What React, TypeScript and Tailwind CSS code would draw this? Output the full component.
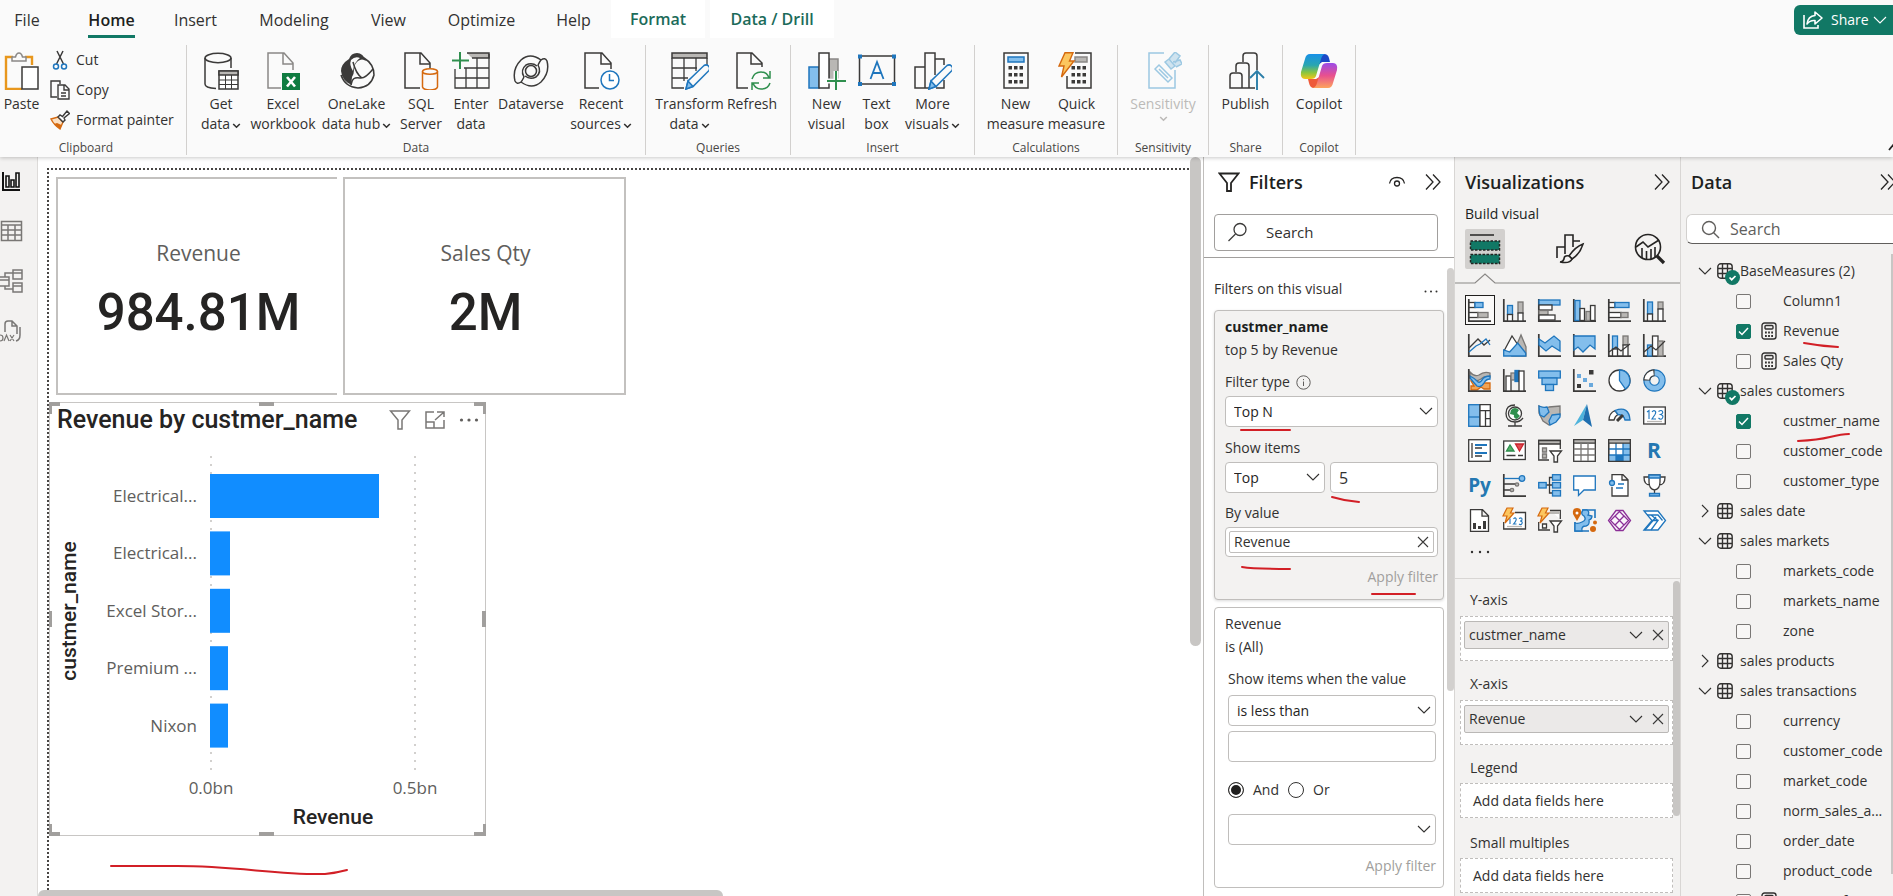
import React, { useState } from 'react';

type Kids = { children?: React.ReactNode };

const DARK = '#3b3a39';
const BLUE = '#1f76bd';
const SKY = '#83beec';
const GRAY = '#b9b7b4';
const GREEN = '#2f8f4e';
const ORANGE = '#d5690f';

/* ---------- small shared glyphs ---------- */

function Chevron({ className = '' }: { className?: string }) {
  return (
    <svg className={className} width="14" height="14" viewBox="0 0 14 14" fill="none" stroke="currentColor" strokeWidth="1.1" aria-hidden="true">
      <path d="M1 4l6 6 6-6" />
    </svg>
  );
}

function SmallChevron() {
  return (
    <svg className="ml-0.5 inline-block" width="9" height="9" viewBox="0 0 9 9" fill="none" stroke="currentColor" strokeWidth="1.600" aria-hidden="true">
      <path d="M1.200 3l3.300 3.200L7.800 3" />
    </svg>
  );
}

function DoubleChevron() {
  return (
    <svg width="18" height="18" viewBox="0 0 18 18" fill="none" stroke="#252423" strokeWidth="1.300" aria-hidden="true">
      <path d="M2 1.500l7 7.500-7 7.500M9 1.500l7 7.500-7 7.500" />
    </svg>
  );
}

function Cross() {
  return (
    <svg width="12" height="12" viewBox="0 0 12 12" fill="none" stroke="#3b3a39" strokeWidth="1.100" aria-hidden="true">
      <path d="M1 1l10 10M11 1L1 11" />
    </svg>
  );
}

function Stroke({ className, w, h, d }: { className: string; w: number; h: number; d: string }) {
  return (
    <svg className={`pointer-events-none absolute ${className}`} width={w} height={h} viewBox={`0 0 ${w} ${h}`} fill="none" stroke="#d21f26" strokeWidth="2" strokeLinecap="round" aria-hidden="true">
      <path d={d} />
    </svg>
  );
}

/* ---------- ribbon ---------- */

function Big({ children }: Kids) {
  return (
    <svg width="38" height="38" viewBox="0 0 38 38" fill="none" stroke={DARK} strokeWidth="1.500" className="shrink-0" aria-hidden="true">
      {children}
    </svg>
  );
}

const pencil = (
  <g stroke={BLUE} fill="#fafafa">
    <path d="M15 37l2-8L33 13.500q2.500-1.500 4.500.5t.5 4.500L22 34.500z" />
    <path d="M15 37l2-8 5 5.500z" fill={SKY} />
  </g>
);

const bolt = <path d="M7 .8h8L11.500 9H16L3.500 25 6 14H1z" fill="#fcc65f" stroke={ORANGE} strokeWidth="1.400" />;

const dots = (x: number, y: number) =>
  [0, 1, 2].flatMap((r) => [0, 1, 2].map((c) => <rect key={`${r}${c}`} x={x + c * 5.500} y={y + r * 7} width="3.500" height="3.500" fill={DARK} stroke="none" />));

const ribbonIcons: Record<string, React.ReactNode> = {
  paste: (
    <Big>
      <path d="M10 5H3v32h16M22 5h7v8" stroke="#e8971d" strokeWidth="2.400" />
      <path d="M9 9V5h3.500q1-4 3.500-4t3.500 4H23v4z" stroke="#8a8886" fill="#fafafa" />
      <rect x="19" y="15" width="16" height="22" fill="#fff" />
    </Big>
  ),
  get: (
    <Big>
      <ellipse cx="16" cy="6" rx="13" ry="4.700" />
      <path d="M3 6v26q0 4 11 4.500M29 6v10" />
      <path d="M17 19h19v18H17z" fill="#fff" />
      <path d="M17 19h19v4H17z" fill={GRAY} />
      <path d="M17 28h19M17 32.500h19M23.500 23v14M29.500 23v14" strokeWidth="1" />
    </Big>
  ),
  excel: (
    <Big>
      <path d="M17 36H4V1h16l9 10v7M19 1v11h10" stroke="#8a8886" />
      <rect x="18" y="21" width="18" height="17" fill="#107c41" stroke="none" />
      <path d="M23 25l8 9.500M31 25l-8 9.500" stroke="#fff" strokeWidth="2.600" />
    </Big>
  ),
  onelake: (
    <Big>
      <path d="M11 7q2-6 8-6t9 8q-4-3-8 0-4 3-4 9 0 4-2 7-1 5 0 8Q4 29 3 19q0-7 8-12z" fill={DARK} stroke="none" />
      <path d="M13 8q4-4 9-2-6 4-7 13-4-6-2-11z" fill="#fafafa" stroke="none" />
      <path d="M26 6q10 6 10 17-3 12-16 13Q7 35 3 23" />
      <path d="M15 10q3 12 9 16M13 33q1-9 9-7 5 1 13-9" />
    </Big>
  ),
  sql: (
    <Big>
      <path d="M18 36H3V1h16l9 10v5M18 1v11h10" />
      <ellipse cx="28" cy="19.500" rx="7.500" ry="2.800" stroke={ORANGE} fill="#fafafa" />
      <path d="M20.500 19.500V35q1 3 7.500 3t7.500-3V19.500" stroke={ORANGE} />
    </Big>
  ),
  enter: (
    <Big>
      <path d="M15 1h22v5H20" fill={GRAY} />
      <path d="M3 17v19h34V2M3 26h34M12 16h25M14 16v20M25 6v30" strokeWidth="1.300" />
      <path d="M8 0v17M0 8.500h17" stroke={GREEN} strokeWidth="2" />
    </Big>
  ),
  dataverse: (
    <Big>
      <circle cx="19" cy="19" r="5.500" />
      <path d="M29 8Q18 0 9 8 0 17 3 29q2 4 6 1 1-1 3-5M9 30q11 8 20 0 9-9 6-21-2-4-6-1-1 1-3 5" />
      <path d="M12 25q-4-7 2-12 6-3 11 1M26 13q4 7-2 12-6 3-11-1" />
    </Big>
  ),
  recent: (
    <Big>
      <path d="M17 36H3V1h17l9 10v6M19 1v11h10" />
      <circle cx="28" cy="28" r="9" stroke={BLUE} fill="#fff" />
      <path d="M27.500 22v6.500H32" stroke={BLUE} />
    </Big>
  ),
  transform: (
    <Big>
      <path d="M1 1h35v5H1z" fill={GRAY} />
      <path d="M1 6v30h12M36 6v7M1 16h25M1 26h16M13 6v23M25 6v13" strokeWidth="1.300" />
      {pencil}
    </Big>
  ),
  refresh: (
    <Big>
      <path d="M15 36H4V1h15l10 10v4M18 1v11h11" />
      <path d="M19 27q2-7 9-7 6 0 8 6M37 19v7h-7M37 31q-2 6-9 6-6 0-8-6M19 38v-7h7" stroke={GREEN} />
    </Big>
  ),
  visual: (
    <Big>
      <rect x="1" y="15" width="10" height="21" fill={SKY} stroke={BLUE} />
      <rect x="21" y="7" width="9" height="20" fill={GRAY} stroke="#8a8886" />
      <rect x="11" y="1" width="10" height="35" fill="#fff" />
      <path d="M28 19v19M19 29h19" stroke="#fafafa" strokeWidth="5" />
      <path d="M28 19v19M19 29h19" stroke={GREEN} strokeWidth="2" />
    </Big>
  ),
  textbox: (
    <Big>
      <rect x="1.500" y="4" width="35" height="28" />
      <path d="M0 2.500h4v4H0zM34 2.500h4v4h-4zM0 30h4v4H0zM34 30h4v4h-4z" fill={BLUE} stroke="none" />
      <path d="M12.500 27L19 10l6.500 17M15 21h8" stroke={BLUE} strokeWidth="1.800" />
    </Big>
  ),
  more: (
    <Big>
      <path d="M1 36V15h10v21zM11 36V1h10v22M21 7h9v6M11 36h5M30 28v8h-8" />
      {pencil}
    </Big>
  ),
  calc: (
    <Big>
      <rect x="7" y="1" width="24" height="35" />
      <rect x="11" y="5" width="16" height="5" fill={SKY} stroke={BLUE} />
      {dots(11.500, 14)}
    </Big>
  ),
  quick: (
    <Big>
      <path d="M17 1h16v35H9V24" />
      <rect x="17" y="5" width="12" height="5" fill={GRAY} stroke="#8a8886" />
      {dots(13.500, 14)}
      {bolt}
    </Big>
  ),
  sensitivity: (
    <Big>
      <g stroke="#9cc8e2">
        <path d="M20 1H5v35h26V18" />
        <path d="M11 17l4-4 13 13-4 4zM15 17l9 9" />
        <path d="M21 10l6 7 4-3-6-7zM25 7l6-7 5 4-5 7M29 10l7-2 2 4-6 3" fill="#cfe3ef" />
      </g>
    </Big>
  ),
  publish: (
    <Big>
      <path d="M3 36V24q0-3 3-3h6q3 0 3 3v12zM9 20v-6q0-3 3-3h7q3 0 3 3v22M16 10V4q0-3 3-3h8q3 0 3 3v14M15 36h13" />
      <path d="M30 38V19M23 26l7-7 7 7" stroke="#2b7ea8" strokeWidth="1.900" />
    </Big>
  ),
  copilot: (
    <svg width="38" height="38" viewBox="0 0 38 38" className="shrink-0" aria-hidden="true">
      <defs>
        <linearGradient id="cpA" x1="0" y1="0" x2="0" y2="1">
          <stop offset="0" stopColor="#1790e8" />
          <stop offset=".45" stopColor="#2aa6b0" />
          <stop offset=".75" stopColor="#8cc63d" />
          <stop offset="1" stopColor="#f5c518" />
        </linearGradient>
        <linearGradient id="cpB" x1="0" y1="0" x2="0" y2="1">
          <stop offset="0" stopColor="#9b4be8" />
          <stop offset=".5" stopColor="#e8508f" />
          <stop offset="1" stopColor="#fda45c" />
        </linearGradient>
      </defs>
      <path d="M19 2h5q4 0 5 4l1 4h-8l-5 4z" fill="#1b49c7" />
      <path d="M19 36h-5q-4 0-5-5l-1-4h8l5-3z" fill="#ee5a3a" />
      <path d="M10 2h15q-3 1-4 5l-5 17q-1 3-5 3H5q-5 0-4-7L5 7q1-5 5-5z" fill="url(#cpA)" />
      <path d="M28 36H13q3-1 4-5l5-17q1-3 5-3h6q5 0 4 7l-4 13q-1 5-5 5z" fill="url(#cpB)" />
    </svg>
  ),
};

function Tool({ icon, lines, w, caret, disabled }: { icon: string; lines: string[]; w: string; caret?: boolean; disabled?: boolean }) {
  return (
    <button type="button" disabled={disabled} className={`flex shrink-0 flex-col items-center ${w} ${disabled ? 'text-[#bcbab8]' : 'text-[#323130]'}`}>
      {ribbonIcons[icon]}
      <span className="mt-1 flex flex-col items-center text-sm leading-5 whitespace-nowrap">
        {lines.map((l, i) => (
          <span key={l}>
            {l}
            {caret && i === lines.length - 1 && lines.length > 1 ? <SmallChevron /> : null}
          </span>
        ))}
        {caret && lines.length === 1 ? <SmallChevron /> : null}
      </span>
    </button>
  );
}

function Group({ label, w, children }: Kids & { label: string; w: string }) {
  return (
    <section aria-label={label} className={`flex shrink-0 flex-col justify-between border-r border-[#d2d0ce] ${w}`}>
      <div className="flex justify-center pt-[7px]">{children}</div>
      <div className="text-center text-xs leading-[14px] text-[#484644]">{label}</div>
    </section>
  );
}

const tabs: [string, string][] = [
  ['File', 'w-[54px]'],
  ['Home', 'w-[115px]'],
  ['Insert', 'w-[53px]'],
  ['Modeling', 'w-[144px]'],
  ['View', 'w-[45px]'],
  ['Optimize', 'w-[141px]'],
  ['Help', 'w-[43px]'],
];

function Ribbon() {
  return (
    <header className="relative z-10 shrink-0 bg-[#fafafa] shadow-[0_1px_4px_rgba(0,0,0,0.22)]">
      <div className="flex h-[38px] items-stretch">
        <nav className="flex shrink-0 text-base text-[#323130]" aria-label="Ribbon tabs">
          {tabs.map(([t, w]) => (
            <button key={t} type="button" className={`flex items-stretch justify-center whitespace-nowrap ${w}`}>
              <span className={t === 'Home' ? 'border-b-[3px] border-[#117865] pt-2 font-semibold text-[#201f1e]' : 'pt-2'}>{t}</span>
            </button>
          ))}
          <button type="button" className="ml-4 w-[94px] bg-white font-semibold text-[#1c6b5a]">Format</button>
          <button type="button" className="ml-[5px] w-[124px] bg-white font-semibold whitespace-nowrap text-[#1c6b5a]">Data / Drill</button>
        </nav>
        <div className="flex-1" />
        <button type="button" className="mt-[5px] flex h-[30px] w-[99px] shrink-0 items-center gap-2 rounded-l-md bg-[#117865] pl-2 text-sm text-white">
          <svg width="21" height="20" viewBox="0 0 21 20" fill="none" stroke="currentColor" strokeWidth="1.600" aria-hidden="true">
            <path d="M2 5v13h14v-3" />
            <path d="M13 2l7 6-7 6v-3.500Q8 10 5 14q1-8 8-8.500z" strokeLinejoin="round" />
          </svg>
          <span>Share</span>
          <Chevron className="-ml-1" />
        </button>
      </div>
      <div className="flex h-[119px] items-stretch">
        <div className="flex flex-1 pt-[7px] pb-[2px]">
          <section aria-label="Clipboard" className="flex w-[187px] shrink-0 flex-col justify-between border-r border-[#d2d0ce]">
            <div className="flex pt-[7px]">
              <Tool icon="paste" lines={['Paste']} w="w-[43px]" />
              <div className="flex flex-col gap-2 pl-[7px] text-sm text-[#323130]">
                <button type="button" className="-mt-[3px] flex h-[22px] items-center gap-1.5">
                  <svg width="20" height="20" viewBox="0 0 20 20" fill="none" stroke={DARK} strokeWidth="1.500" aria-hidden="true">
                    <path d="M7 1l6.500 13M13 1L6.500 14" />
                    <g stroke={BLUE}><circle cx="6" cy="16.500" r="2.500" /><circle cx="14" cy="16.500" r="2.500" /></g>
                  </svg>
                  Cut
                </button>
                <button type="button" className="flex h-[22px] items-center gap-1.5">
                  <svg width="20" height="20" viewBox="0 0 20 20" fill="none" stroke={DARK} strokeWidth="1.400" aria-hidden="true">
                    <path d="M7 17H1V1h9v3" /><path d="M8 5h7l4 4v10H8zM14 5v5h5M11 13h5M11 16h5" />
                  </svg>
                  Copy
                </button>
                <button type="button" className="flex h-[22px] items-center gap-1.5 whitespace-nowrap">
                  <svg width="20" height="20" viewBox="0 0 20 20" fill="none" stroke={DARK} strokeWidth="1.400" aria-hidden="true">
                    <path d="M1 9l7-2 5 5-3 7q-6-4-9-10z" stroke={ORANGE} fill="#fbe0c3" />
                    <path d="M7 13l-3 1 6 5 1.500-4z" fill={ORANGE} stroke="none" />
                    <path d="M8 7l2-2 2.500 1.500L17 1l2.500 2.500L14 8l1 2-2 2z" fill="#fff" />
                  </svg>
                  Format painter
                </button>
              </div>
            </div>
            <div className="pr-[14px] text-center text-xs leading-[14px] text-[#484644]">Clipboard</div>
          </section>
          <Group label="Data" w="w-[459px]">
            <div className="flex w-full pl-1">
              <Tool icon="get" lines={['Get', 'data']} w="w-[60px]" caret />
              <Tool icon="excel" lines={['Excel', 'workbook']} w="w-[64px]" />
              <Tool icon="onelake" lines={['OneLake', 'data hub']} w="w-[83px]" caret />
              <Tool icon="sql" lines={['SQL', 'Server']} w="w-[46px]" />
              <Tool icon="enter" lines={['Enter', 'data']} w="w-[54px]" />
              <Tool icon="dataverse" lines={['Dataverse']} w="w-[66px]" />
              <Tool icon="recent" lines={['Recent', 'sources']} w="w-[74px]" caret />
            </div>
          </Group>
          <Group label="Queries" w="w-[145px]">
            <Tool icon="transform" lines={['Transform', 'data']} w="w-[68px]" caret />
            <Tool icon="refresh" lines={['Refresh']} w="w-[57px]" />
          </Group>
          <Group label="Insert" w="w-[184px]">
            <Tool icon="visual" lines={['New', 'visual']} w="w-[50px]" />
            <Tool icon="textbox" lines={['Text', 'box']} w="w-[50px]" />
            <Tool icon="more" lines={['More', 'visuals']} w="w-[62px]" caret />
          </Group>
          <Group label="Calculations" w="w-[143px]">
            <Tool icon="calc" lines={['New', 'measure']} w="w-[61px]" />
            <Tool icon="quick" lines={['Quick', 'measure']} w="w-[61px]" />
          </Group>
          <Group label="Sensitivity" w="w-[91px]">
            <Tool icon="sensitivity" lines={['Sensitivity']} w="w-[80px]" caret disabled />
          </Group>
          <Group label="Share" w="w-[74px]">
            <Tool icon="publish" lines={['Publish']} w="w-[60px]" />
          </Group>
          <Group label="Copilot" w="w-[73px]">
            <Tool icon="copilot" lines={['Copilot']} w="w-[60px]" />
          </Group>
        </div>
        <button type="button" aria-label="Collapse ribbon" className="self-end overflow-hidden pb-1.5">
          <svg width="5" height="9" viewBox="0 0 5 9" fill="none" stroke="#252423" strokeWidth="1.800" aria-hidden="true">
            <path d="M1 8l5-6" />
          </svg>
        </button>
      </div>
    </header>
  );
}

/* ---------- view switcher ---------- */

function ViewRail() {
  return (
    <nav aria-label="Views" className="flex w-[38px] shrink-0 flex-col gap-[26px] border-r border-[#dddbd9] bg-[#f3f2f1] pt-3">
      <button type="button" aria-label="Report view" className="flex h-6 items-center">
        <svg width="24" height="24" viewBox="0 0 24 24" fill="none" stroke="#111" strokeWidth="1.600" aria-hidden="true">
          <path d="M3 3v18h17" strokeWidth="2" /><path d="M6 18V7h3v11zM11 18v-7h3v7zM16 18V4h3v14z" />
        </svg>
      </button>
      <button type="button" aria-label="Table view" className="flex h-6 items-center">
        <svg width="24" height="24" viewBox="0 0 24 24" fill="none" stroke="#797775" strokeWidth="1.500" aria-hidden="true">
          <path d="M1.500 2.500h20v19h-20zM1.500 6h20M1.500 11h20M1.500 16h20M8 6v15M15 6v15" />
        </svg>
      </button>
      <button type="button" aria-label="Model view" className="flex h-6 items-center">
        <svg width="24" height="24" viewBox="0 0 24 24" fill="none" stroke="#797775" strokeWidth="1.500" aria-hidden="true">
          <path d="M0 8h9v9H0M0 11h9M13 1h9v9h-9zM13 4h9M13 14h9v9h-9zM13 17h9M5 8V4h8M5 17v3h8" />
        </svg>
      </button>
      <button type="button" aria-label="DAX query view" className="flex h-6 items-center">
        <svg width="24" height="24" viewBox="0 0 24 24" fill="none" stroke="#797775" strokeWidth="1.500" aria-hidden="true">
          <path d="M5 13V5q0-3 3-3h4l5 5v8M12 2v5h5M20 8v8q0 5-4 6" />
          <path d="M0 16q3 0 3 3t-3 3M4 22l2.500-6L9 22M10 16l4 6M14 16l-4 6" strokeWidth="1.200" />
        </svg>
      </button>
    </nav>
  );
}

/* ---------- report canvas ---------- */

const bars = [
  { name: 'Electrical...', w: 169 },
  { name: 'Electrical...', w: 20 },
  { name: 'Excel Stor...', w: 20 },
  { name: 'Premium ...', w: 18 },
  { name: 'Nixon', w: 18 },
];

function Kpi({ label, value, className }: { label: string; value: string; className: string }) {
  return (
    <article className={`absolute flex h-[218px] flex-col items-center border-2 border-[#c3c1bf] bg-white pt-[58px] pl-[2px] ${className}`}>
      <h3 className="text-[21px] leading-8 text-[#605e5c]">{label}</h3>
      <p className="mt-4 font-['Roboto'] text-[51px] leading-[56px] font-medium text-[#252423]">{value}</p>
    </article>
  );
}

function ReportCanvas() {
  return (
    <main className="relative min-w-0 flex-1 overflow-hidden bg-white">
      <div className="absolute top-[11px] right-[14px] bottom-[6px] left-[9px] border-t-2 border-l-2 border-dotted border-[#484644]" />
      <Kpi label="Revenue" value="984.81M" className="top-5 left-[18px] w-[281px] border-r-0" />
      <Kpi label="Sales Qty" value="2M" className="top-5 left-[305px] w-[283px]" />

      <article className="absolute top-[245px] left-[11px] h-[434px] w-[437px] border border-[#c8c6c4] bg-white">
        <div className="flex items-center pt-[3px] pr-1.5 pl-[7px]">
          <h3 className="flex-1 font-['Roboto'] text-[25px] leading-7 font-medium whitespace-nowrap text-[#252423]">Revenue by custmer_name</h3>
          <div className="flex items-center gap-[14px]">
            <button type="button" aria-label="Filters on visual">
              <svg width="22" height="20" viewBox="0 0 22 20" fill="none" stroke="#797775" strokeWidth="1.500" aria-hidden="true"><path d="M1.500 1h19L13 10v9H9v-9z" /></svg>
            </button>
            <button type="button" aria-label="Focus mode">
              <svg width="20" height="18" viewBox="0 0 20 18" fill="none" stroke="#797775" strokeWidth="1.500" aria-hidden="true"><path d="M9 1H1v16h18V9M1 11h8v6M12 1h7v5M18.500 1.500L10 9" /></svg>
            </button>
            <button type="button" aria-label="More options">
              <svg width="20" height="6" viewBox="0 0 20 6" fill="#605e5c" aria-hidden="true"><circle cx="2.500" cy="3" r="1.600" /><circle cx="10" cy="3" r="1.600" /><circle cx="17.500" cy="3" r="1.600" /></svg>
            </button>
          </div>
        </div>
        <svg className="absolute top-[28px] left-0" width="435" height="402" viewBox="0 0 435 402" role="img" aria-label="Revenue by customer">
          <g stroke="#d2d0ce" strokeWidth="2" strokeDasharray="2 6">
            <path d="M161 25v320M365 25v320" />
          </g>
          {bars.map((b, i) => (
            <g key={i}>
              <rect x="160" y={43 + i * 57.400} width={b.w} height="44" fill="#118dff" />
              <text x="147" y={71 + i * 57.400} textAnchor="end" fontSize="17" fill="#605e5c">{b.name}</text>
            </g>
          ))}
          <g fontSize="17" fill="#605e5c" textAnchor="middle">
            <text x="161" y="363">0.0bn</text>
            <text x="365" y="363">0.5bn</text>
          </g>
          <g fontSize="21" fontWeight="500" fill="#252423" textAnchor="middle" className="font-['Roboto']">
            <text x="283" y="393">Revenue</text>
            <text x="26" y="180" transform="rotate(-90 26 180)">custmer_name</text>
          </g>
        </svg>
        <svg className="pointer-events-none absolute -top-px -left-px" width="437" height="434" viewBox="0 0 437 434" fill="#a19f9d" aria-hidden="true">
          <path d="M0 0h11v4H3v8H0zM437 0h-12v4h9v8h3zM0 434h11v-4H3v-8H0zM437 434h-12v-4h9v-8h3zM210 0h15v4h-15zM210 430h15v4h-15zM0 209h3v16H0zM433 209h4v16h-4z" />
        </svg>
      </article>
      <Stroke className="bottom-[19px] left-[71px]" w={241} h={14} d="M2 3h66c60 0 100 9 148 8q11-1 22-4" />

      <div className="absolute top-0 right-[2px] h-[489px] w-[11px] rounded-full bg-[#c8c6c4]" />
      <div className="absolute bottom-0 left-0 h-[6px] w-[685px] rounded-t-md bg-[#c8c6c4]" />
    </main>
  );
}

/* ---------- filters ---------- */

function Dropdown({ label, options, className = '' }: { label: string; options: string[]; className?: string }) {
  return (
    <div className={`relative h-[31px] shrink-0 ${className}`}>
      <select aria-label={label} className="h-full w-full appearance-none rounded-sm border border-[#c0bebc] bg-white pl-2 text-sm text-[#252423]">
        {options.map((o) => <option key={o}>{o}</option>)}
      </select>
      <Chevron className="pointer-events-none absolute top-2 right-[5px]" />
    </div>
  );
}

function FiltersPane() {
  const [mode, setMode] = useState('and');
  return (
    <aside aria-label="Filters" className="relative flex w-[252px] shrink-0 flex-col overflow-hidden border-x border-[#c0bebc] border-r-[#d8d6d4] bg-white text-sm text-[#323130]">
      <div className="shrink-0 border-b border-[#a19f9d] px-2.5 pb-[6px]">
        <div className="flex h-[49px] items-center pl-1">
          <svg width="22" height="20" viewBox="0 0 22 20" fill="none" stroke="#252423" strokeWidth="1.800" aria-hidden="true"><path d="M1.500 1.500h19L13 11v8H9v-8z" /></svg>
          <h2 className="ml-[9px] text-lg font-semibold text-[#201f1e]">Filters</h2>
          <div className="flex-1" />
          <svg width="18" height="12" viewBox="0 0 18 12" fill="none" stroke="#252423" strokeWidth="1.300" aria-hidden="true"><path d="M1.500 7.500q1-6 7.500-6t7.500 6" /><circle cx="9" cy="7.500" r="2.500" /></svg>
          <button type="button" aria-label="Collapse filters" className="mr-0.5 ml-[18px]"><DoubleChevron /></button>
        </div>
        <label className="mt-2 mr-1.5 flex h-[37px] items-center gap-[18px] rounded-sm border border-[#a19f9d] pl-3">
          <svg className="shrink-0" width="21" height="21" viewBox="0 0 21 21" fill="none" stroke="#3b3a39" strokeWidth="1.300" aria-hidden="true"><circle cx="13" cy="7.500" r="6" /><path d="M8.500 12L1.500 19" /></svg>
          <input aria-label="Search filters" placeholder="Search" className="w-full min-w-0 bg-transparent text-[15px] outline-none placeholder:text-[#323130]" />
        </label>
      </div>
      <div className="px-2.5 pt-[19px]">
        <div className="flex h-[23px] items-center justify-between pr-1.5">
          <span>Filters on this visual</span>
          <svg className="mt-1.5" width="14" height="3" viewBox="0 0 14 3" fill="#323130" aria-hidden="true"><circle cx="1.500" cy="1.500" r="1" /><circle cx="7" cy="1.500" r="1" /><circle cx="12.500" cy="1.500" r="1" /></svg>
        </div>
        <section className="relative mt-[10px] h-[290px] w-[230px] rounded-sm border border-[#c0bebc] bg-[#f3f2f1] pt-1 pl-2.5 shadow-[0_1px_3px_rgba(0,0,0,0.15)]">
          <h3 className="leading-[23px] font-bold text-[#201f1e]">custmer_name</h3>
          <p className="leading-[23px]">top 5 by Revenue</p>
          <div className="mt-[10px] flex items-center gap-1.5 leading-[22px]">
            Filter type
            <svg width="15" height="15" viewBox="0 0 15 15" fill="none" stroke="#605e5c" aria-hidden="true"><circle cx="7.500" cy="7.500" r="6.700" /><path d="M7.500 6.500V11M7.500 4v1.200" /></svg>
          </div>
          <Dropdown label="Filter type" options={['Top N', 'Basic filtering']} className="mt-[3px] w-[213px]" />
          <div className="mt-[10px] leading-[22px]">Show items</div>
          <div className="mt-[3px] flex gap-[5px]">
            <Dropdown label="Show items" options={['Top', 'Bottom']} className="w-[100px]" />
            <input aria-label="Item count" defaultValue="5" className="h-[31px] w-[108px] rounded-sm border border-[#c0bebc] bg-white px-2 text-base" />
          </div>
          <div className="mt-[9px] leading-[22px]">By value</div>
          <div className="mt-[3px] w-[213px] rounded-sm border border-[#c0bebc] bg-white p-[3px]">
            <div className="flex h-[22px] items-center justify-between rounded-xs border border-[#c0bebc] pr-1 pl-1">
              <span>Revenue</span>
              <button type="button" aria-label="Remove Revenue"><Cross /></button>
            </div>
          </div>
          <button type="button" className="mt-[9px] block w-[213px] text-right leading-[22px] text-[#a19f9d]">Apply filter</button>
          <Stroke className="top-[116px] left-6" w={54} h={6} d="M2 3h49" />
          <Stroke className="top-[184px] left-[115px]" w={32} h={10} d="M2 2q13 4 27 5" />
          <Stroke className="top-[253px] left-[25px]" w={54} h={8} d="M2 3q12 2 48 2" />
          <Stroke className="top-[280px] left-[155px]" w={48} h={6} d="M2 3h43" />
        </section>
        <section className="mt-[7px] h-[281px] w-[230px] rounded-sm border border-[#c0bebc] bg-white px-2.5 pt-1">
          <h3 className="leading-[23px]">Revenue</h3>
          <p className="leading-[23px]">is (All)</p>
          <div className="mt-[10px] ml-[3px] w-[208px]">
            <div className="leading-[22px] whitespace-nowrap">Show items when the value</div>
            <Dropdown label="Condition" options={['is less than', 'is greater than']} className="mt-[5px]" />
            <input aria-label="Condition value" className="mt-[5px] block h-[31px] w-full rounded-sm border border-[#c0bebc] bg-white px-2" />
            <div className="mt-[17px] flex h-[22px] items-center">
              {[['and', 'And'], ['or', 'Or']].map(([v, t]) => (
                <label key={v} className="mr-[9px] flex items-center gap-[9px]">
                  <input
                    type="radio"
                    name="logic"
                    checked={mode === v}
                    onChange={() => setMode(v)}
                    className="h-4 w-4 appearance-none rounded-full border border-[#323130] bg-white checked:bg-[#201f1e] checked:shadow-[inset_0_0_0_2px_#fff]"
                  />
                  {t}
                </label>
              ))}
            </div>
            <Dropdown label="Second condition" options={['']} className="mt-[13px]" />
            <button type="button" className="mt-[10px] block w-full text-right leading-[22px] text-[#a19f9d]">Apply filter</button>
          </div>
        </section>
      </div>
      <div className="absolute top-[111px] right-0 h-[423px] w-[7px] rounded-full bg-[#d2d0ce]" />
    </aside>
  );
}

/* ---------- visualizations ---------- */

const axis = <path d="M.8 0v22.200H23" stroke={DARK} strokeWidth="1.700" />;
const b = { stroke: BLUE, fill: SKY } as const;
const g = { stroke: '#797775', fill: GRAY } as const;
const k = { stroke: DARK, fill: '#fff' } as const;
const smallBolt = <path d="M4-1h6L7.500 4H11L2 14l2-7H0z" fill="#fcc65f" stroke={ORANGE} strokeWidth="1.200" />;

const gallery: [string, React.ReactNode][] = [
  ['Stacked bar chart', <>{axis}<rect x="1" y="3.500" width="6" height="5" {...k} /><rect x="7" y="3.500" width="8" height="5" {...b} /><rect x="1" y="13.500" width="9" height="5" {...k} /><rect x="10" y="13.500" width="10" height="5" {...g} /></>],
  ['Stacked column chart', <>{axis}<rect x="4.500" y="6.500" width="5" height="9" {...b} /><rect x="4.500" y="15.500" width="5" height="6.500" {...k} /><rect x="15" y="3" width="5" height="11" {...g} /><rect x="15" y="14" width="5" height="8" {...k} /></>],
  ['Clustered bar chart', <>{axis}<rect x="1" y="1" width="21" height="5" {...b} /><rect x="1" y="6" width="13" height="5" {...k} /><rect x="1" y="11.500" width="9" height="4.500" {...g} /><rect x="1" y="16" width="16" height="5" {...k} /></>],
  ['Clustered column chart', <>{axis}<rect x="2" y="1.500" width="5" height="20" {...b} /><rect x="7" y="9.500" width="4.500" height="12" {...k} /><rect x="13" y="12.500" width="4.500" height="9" {...g} /><rect x="17.500" y="6.500" width="4.500" height="15" {...k} /></>],
  ['100% stacked bar chart', <>{axis}<rect x="1" y="3.500" width="6" height="5" {...k} /><rect x="7" y="3.500" width="14" height="5" {...b} /><rect x="1" y="13.500" width="12" height="5" {...k} /><rect x="13" y="13.500" width="7" height="5" {...g} /></>],
  ['100% stacked column chart', <>{axis}<rect x="4.500" y="3" width="5" height="12" {...b} /><rect x="4.500" y="15" width="5" height="7" {...k} /><rect x="15" y="3" width="5" height="7" {...g} /><rect x="15" y="10" width="5" height="12" {...k} /></>],
  ['Line chart', <>{axis}<path d="M1 14L10 5l6 6 6-5" stroke={DARK} /><path d="M1 18l7-6 4-2 6-5 4 6" stroke={BLUE} /></>],
  ['Area chart', <><path d="M9 22L18 1l5 12v9z" {...g} /><path d="M1 17L9 2l8 12" {...k} /><path d="M.7 22V16l6 2 8-9 8 10v3z" {...b} /></>],
  ['Stacked area chart', <>{axis}<path d="M1 5l6 4 9-7 6 5v10l-8-5-6 5-7-6z" {...b} /></>],
  ['100% stacked area chart', <>{axis}<path d="M1 2h21v13l-5-4-7 7-5-5-4 3z" {...b} /></>],
  ['Line and stacked column chart', <>{axis}<rect x="4.500" y="2" width="5" height="13" {...b} /><rect x="4.500" y="15" width="5" height="7" {...k} /><rect x="15" y="2" width="5" height="9" {...g} /><rect x="15" y="11" width="5" height="11" {...k} /><path d="M1 18l7-5 5 4 9-7" stroke={DARK} /></>],
  ['Line and clustered column chart', <>{axis}<rect x="4.500" y="11" width="5" height="11" {...b} /><rect x="9.500" y="2" width="5.500" height="20" {...k} /><rect x="15" y="7" width="5" height="15" {...g} /><path d="M1 18l7-6 5 4 9-9" stroke={DARK} /></>],
  ['Ribbon chart', <><path d="M2 3q4 5 9 3 5-4 11-2v4q-6-1-9 2-6 4-11-1z" {...g} /><path d="M3 12h5l5 2h9v6h-6l-3-2-4 3H3v-4h3z" fill="#f2a354" stroke={ORANGE} /><path d="M2 9q4 5 7 8 4 2 7-3 2-4 6-4V7q-6 0-8 4-3 4-5 1-3-3-7-5z" {...b} />{axis}</>],
  ['Waterfall chart', <>{axis}<rect x="3" y="7" width="5" height="15" {...k} /><rect x="8" y="4" width="4" height="7" {...g} /><rect x="12" y="1.500" width="4" height="11" stroke={BLUE} fill={BLUE} /><rect x="16" y="2" width="5" height="20" {...k} /></>],
  ['Funnel', <><rect x=".7" y="2" width="21.600" height="7" {...b} /><rect x="4" y="9" width="15" height="6.500" {...b} /><rect x="7.500" y="15.500" width="8" height="6" {...b} /></>],
  ['Scatter chart', <>{axis}<g stroke="none"><path d="M16 1h4.500v4.500H16zM4 15h4v4H4z" fill={DARK} /><path d="M4 5h4v4H4zM10 9h4v4h-4zM16 14h4v4h-4z" fill="#6aa9dc" /></g></>],
  ['Pie chart', <><circle cx="11.500" cy="11.500" r="10.500" {...k} /><path d="M11.500 1a10.500 10.500 0 0 1 6 19l-6-8.500z" {...b} /></>],
  ['Donut chart', <><circle cx="11.500" cy="11.500" r="7.700" stroke={BLUE} strokeWidth="7" /><circle cx="11.500" cy="11.500" r="7.700" stroke={SKY} strokeWidth="4.800" /><path d="M3.800 11.500a7.700 7.700 0 0 1 7.700-7.700" stroke={DARK} strokeWidth="7" /><path d="M3.800 10.500a7.700 7.700 0 0 1 6.700-6.700" stroke="#fff" strokeWidth="4.800" /></>],
  ['Treemap', <><rect x=".7" y=".7" width="11" height="21.600" {...b} /><path d="M.7 13h11" stroke={BLUE} /><path d="M12 .7h10.300v6H12zM12 6.700h5.500v15.600H12zM17.500 6.700h4.800v8h-4.800zM17.500 14.700h4.800v7.600h-4.800z" {...k} /></>],
  ['Map', <><circle cx="12" cy="9.500" r="6.500" fill="#fff" stroke={DARK} /><path d="M8 6q4-4 8 0l-2 3 3 3-3 3q-4-1-3-4l-4-1z" fill={GREEN} /><path d="M12 1q-9 0-9 8.500T12 18q5 0 8-4M12 18v3.500M5 22h14" stroke={DARK} /></>],
  ['Filled map', <><path d="M1 2q5 3 10 1l11-1v9l-4 6-7 4-6-4-4-8z" {...g} /><path d="M1 2q4 2 8 1l2 5-5 5-4-2q-1-4-1-9zM14 11l8-1v3l-4 5-6 3-1-4z" {...b} /></>],
  ['Azure map', <g stroke="none"><path d="M14 0L1 22l9-6z" fill="#4eb3dc" /><path d="M14 0l5 23-9-7z" fill="#1f6fb0" /></g>],
  ['Gauge', <><path d="M1 16a10.500 10.500 0 0 1 6-9.500l3 4Q7 12 6 16z" {...k} /><path d="M7 6.500q14-5 15 9.500h-5q-1-5-7-5.500z" {...b} /><path d="M9 17l6-6" stroke={DARK} strokeWidth="3" /></>],
  ['Card', <><rect x=".7" y="3" width="21.600" height="17" {...k} /><path d="M4 8l2-1.500V15M9 8q1.500-2 3-1t0 3.500L9 15h4M15.500 7.500q3-2 4 0t-2 3q3.500 1 2 3.500t-4 0" stroke={BLUE} strokeWidth="1.100" /><path d="M4 17.500h15" stroke={GRAY} /></>],
  ['Multi-row card', <><rect x=".7" y=".7" width="21.600" height="21.600" {...k} /><path d="M7 6h12M7 14h12" stroke={BLUE} strokeWidth="2" /><path d="M7 9h7M7 17h7M4 4v15" stroke={DARK} /></>],
  ['KPI', <><rect x=".7" y="2" width="21.600" height="18.500" {...k} /><path d="M3.500 12L7 6l4 6z" fill="#56b36b" stroke={GREEN} /><path d="M12.500 5h8l-4 7z" fill="#e04b52" stroke="#c8242d" /><path d="M3.500 16.500h9M15 16.500h5" stroke={DARK} /></>],
  ['Slicer', <><path d="M11 21H.7V1.500h21.600V10" {...k} /><path d="M.7 1.500h21.600v3.500H.7z" fill={GRAY} stroke={DARK} /><path d="M4.500 9h4v4h-4zM4.500 15h4v4h-4z" {...g} /><path d="M12 12h11.500L19.500 17v6h-3.500v-6z" {...k} /></>],
  ['Table', <><rect x=".7" y=".7" width="21.600" height="21.600" {...k} /><path d="M.7.7h21.600v3.500H.7z" fill={GRAY} stroke={DARK} /><path d="M.7 10h21.600M.7 16h21.600M8 4v18M15 4v18" stroke="#797775" /></>],
  ['Matrix', <><rect x=".7" y=".7" width="21.600" height="21.600" {...k} /><path d="M15 4h7v18H1v-6h14z" fill={SKY} /><path d="M8 16h7v6H8z" fill={BLUE} /><path d="M.7 10h21.600M.7 16h21.600M8 4v18M15 4v18" stroke={BLUE} /><path d="M.7.7h21.600v3.500H.7z" fill={GRAY} /><path d="M.7.7h21.600v21.600H.7zM.7 4.200h21.600" stroke={DARK} /></>],
  ['R script visual', <text x="11" y="19" textAnchor="middle" fontSize="21" fontWeight="700" fill="#2478b2" stroke="none">R</text>],
  ['Python visual', <text x="11.500" y="18" textAnchor="middle" fontSize="19" fontWeight="700" fill="#2478b2" stroke="none">Py</text>],
  ['Key influencers', <>{axis}<path d="M1 4.500h15" stroke={BLUE} /><circle cx="19" cy="4.500" r="2.800" {...b} /><path d="M1 10h11M1 16h6" stroke={DARK} /><circle cx="14" cy="10.500" r="1.700" {...g} /><circle cx="9" cy="16" r="1.700" {...g} /></>],
  ['Decomposition tree', <><path d="M8 11h7M11.500 11V3.500H15M11.500 11v8H15" stroke={DARK} /><rect x=".7" y="8.500" width="7.500" height="5.500" {...b} /><rect x="14.500" y=".7" width="8" height="5.500" {...b} /><rect x="14.500" y="8.500" width="8" height="5.500" {...b} /><rect x="14.500" y="16.500" width="8" height="5.500" {...b} /></>],
  ['Q&A', <path d="M.7 2h21.600v14H11l-5.500 5.500V16H.7z" fill="#fff" stroke={BLUE} />],
  ['Smart narrative', <><path d="M4 6V.7h11l5 5V22H4v-9M14 .7V6h6" {...k} /><circle cx="4" cy="9" r="2.500" {...b} /><path d="M10 10h6M8 14h7" stroke={BLUE} /></>],
  ['Goals', <><path d="M6 1h11v7q0 7-5.500 8Q6 15 6 8zM6 3H1q0 8 6 8M17 3h5q0 8-6 8M11.500 16v4" stroke={DARK} fill="#fff" /><path d="M6 1h11v3H6z" {...b} /><path d="M6.500 19.500h10V22h-10z" {...b} /></>],
  ['Paginated report', <><path d="M2.500.7h12l6 6v15.600h-18zM14 .7v6.500h6.500" {...k} /><path d="M5 14h3v6H5zM10 17h3v3h-3zM15 12h3v8h-3z" fill={DARK} /></>],
  ['New card', <><path d="M12 3.500h10.500V20H.7v-7" {...k} /><path d="M7 9.500V15M10.500 10q1.500-2 2.500-.5t-2.500 5.500h3M16 9.500q3-1.500 3 .7t-2 1.800q3 .5 2 2.500t-3 .5" stroke={BLUE} strokeWidth="1.100" /><path d="M4 17.500h15" stroke={GRAY} />{smallBolt}</>],
  ['New slicer', <><path d="M12 21H.7v-8M12 1.500h10.300V10" {...k} /><path d="M12 2h10v3H11z" fill={GRAY} /><path d="M4.500 15h4v4h-4zM12 12h11.500L19.500 17v6h-3.500v-6z" {...k} />{smallBolt}</>],
  ['ArcGIS map', <><path d="M9 1h13v8M16 22H2v-9" stroke={BLUE} strokeWidth="1.600" /><path d="M10 1q-3 4 1 6 3 4-2 6-4 2-7 1v8h7q-1-5 4-5 4-1 3-6 3-1 3-4l-4-1q2-3-1-5z" {...b} /><path d="M4 12L0 5q-1-6 4-6t4 6z" fill={ORANGE} /><circle cx="20" cy="20" r="3" fill={ORANGE} /><circle cx="22" cy="13.500" r="2" fill={ORANGE} /><circle cx="4" cy="4" r="1.500" fill="#fff" /></>],
  ['Power Apps visual', <g stroke="#8b2f97" fill="#faf5fb" strokeWidth="1.300"><path d="M8 1.500h7L22.500 11.500 15 21.500H8L.5 11.500z" /><path d="M11.500 2.500l4.500 4.500-9 9-4.500-4.500zM11.500 20.500L7 16l9-9 4.500 4.500zM7 7l9 9" fill="none" /></g>],
  ['Power Automate visual', <g stroke={BLUE} fill="#fff" strokeWidth="1.300"><path d="M1 21l8-9.500L1 2h14l7.500 9.500L15 21z" /><path d="M4 6h11l4.500 5.500M9 11.500h6l-7 9.500M15 11.500l-7-5.500M2 21L13 8" fill="none" /></g>],
];

function FieldWell({ label, value }: { label: string; value?: string }) {
  return (
    <section>
      <h4 className="ml-[15px] leading-[22px]">{label}</h4>
      {value ? (
        <div className="mt-[5px] ml-[5px] h-[45px] w-[213px] border border-dashed border-[#c0bebc] bg-white px-[3px] pt-1">
          <div className="flex h-7 items-center gap-[9px] rounded-xs border border-[#bab8b6] bg-[#ebe9e8] pr-[4px] pl-1">
            <span className="flex-1">{value}</span>
            <button type="button" aria-label={`${value} options`}><Chevron /></button>
            <button type="button" aria-label={`Remove ${value}`}><Cross /></button>
          </div>
        </div>
      ) : (
        <div className="mt-1 ml-[5px] flex h-[35px] w-[213px] items-center border border-dashed border-[#c0bebc] bg-white pl-3">Add data fields here</div>
      )}
    </section>
  );
}

function VisualizationsPane() {
  return (
    <aside aria-label="Visualizations" className="flex w-[226px] shrink-0 flex-col overflow-hidden border-r border-[#d8d6d4] bg-[#f3f2f1] text-sm text-[#323130]">
      <div className="flex h-[50px] shrink-0 items-center justify-between pr-[9px] pl-2.5">
        <h2 className="text-lg font-semibold text-[#201f1e]">Visualizations</h2>
        <button type="button" aria-label="Collapse visualizations"><DoubleChevron /></button>
      </div>
      <h3 className="-mt-1 pl-2.5 leading-[22px] font-medium text-[#201f1e]">Build visual</h3>
      <div className="flex shrink-0 items-center justify-between pt-1 pr-2.5 pl-2.5">
        <button type="button" aria-label="Build visual" className="flex h-10 w-10 items-center justify-center rounded-xs bg-[#d2d0ce]">
          <svg width="32" height="32" viewBox="0 0 32 32" fill="#117865" stroke="#252423" strokeWidth="1.500" aria-hidden="true">
            <path d="M1 2h24" /><path d="M1.500 8h29v9h-29zM1.500 21.500h29v9h-29z" strokeDasharray="2.500 1.500" />
          </svg>
        </button>
        <button type="button" aria-label="Format visual">
          <svg width="30" height="30" viewBox="0 0 30 30" fill="none" stroke="#252423" strokeWidth="1.600" aria-hidden="true">
            <path d="M2 24V13h8M10 20V1h8v12M18 7h7" />
            <path d="M28 10q-8 3-14 12l3 3q8-5 11-15z" fill="#f3f2f1" /><path d="M14 22q-5-1-5 3-1 3-4 3 10 2 12-3z" fill="#f3f2f1" />
          </svg>
        </button>
        <button type="button" aria-label="Analytics" className="mr-1">
          <svg width="32" height="32" viewBox="0 0 32 32" fill="none" stroke="#252423" strokeWidth="1.600" aria-hidden="true">
            <circle cx="14" cy="14" r="12.500" /><path d="M2 14l7-5 5 5 11-7M8 15v10M12.500 18v8M17 16v10M21 14v10" /><path d="M23 23l7 7" strokeWidth="3.200" />
          </svg>
        </button>
      </div>
      <svg className="mt-1 shrink-0" width="226" height="11" viewBox="0 0 226 11" fill="none" stroke="#8a8886" strokeWidth="1.200" aria-hidden="true"><path d="M0 10h20l10-9 10 9h186" /></svg>
      <div className="mt-[11px] grid grid-cols-6 gap-y-[5px] pr-2 pl-[7px]">
        {gallery.map(([name, art], i) => (
          <button
            key={name}
            type="button"
            aria-label={name}
            className={`flex h-[30px] w-[30px] items-center justify-center justify-self-center ${i === 0 ? 'border border-[#201f1e] bg-[#faf9f8]' : ''}`}
          >
            <svg className="shrink-0 overflow-visible" width="23" height="23" viewBox="0 0 23 23" fill="none" strokeWidth="1.300" aria-hidden="true">{art}</svg>
          </button>
        ))}
      </div>
      <button type="button" aria-label="More visuals" className="mt-[12px] ml-[15px] flex h-[10px] items-center self-start">
        <svg width="20" height="4" viewBox="0 0 20 4" fill="#323130" aria-hidden="true"><circle cx="2" cy="2" r="1.200" /><circle cx="10" cy="2" r="1.200" /><circle cx="18" cy="2" r="1.200" /></svg>
      </button>
      <div className="relative mt-[21px] flex shrink-0 flex-col gap-3 border-t border-[#d8d6d4] pt-2.5">
        <FieldWell label="Y-axis" value="custmer_name" />
        <FieldWell label="X-axis" value="Revenue" />
        <FieldWell label="Legend" />
        <div className="pt-0.5"><FieldWell label="Small multiples" /></div>
        <div className="absolute top-[2px] right-0 h-[235px] w-[7px] rounded-full bg-[#c8c6c4]" />
      </div>
    </aside>
  );
}

/* ---------- data ---------- */

type Field = { name: string; on?: boolean; measure?: boolean; mark?: 'a' | 'b' };
type TableNode = { name: string; open: boolean; used?: boolean; fields: Field[] };

const model: TableNode[] = [
  { name: 'BaseMeasures (2)', open: true, used: true, fields: [{ name: 'Column1' }, { name: 'Revenue', on: true, measure: true, mark: 'a' }, { name: 'Sales Qty', measure: true }] },
  { name: 'sales customers', open: true, used: true, fields: [{ name: 'custmer_name', on: true, mark: 'b' }, { name: 'customer_code' }, { name: 'customer_type' }] },
  { name: 'sales date', open: false, fields: [] },
  { name: 'sales markets', open: true, fields: [{ name: 'markets_code' }, { name: 'markets_name' }, { name: 'zone' }] },
  { name: 'sales products', open: false, fields: [] },
  {
    name: 'sales transactions',
    open: true,
    fields: [{ name: 'currency' }, { name: 'customer_code' }, { name: 'market_code' }, { name: 'norm_sales_a...' }, { name: 'order_date' }, { name: 'product_code' }, { name: 'revenue_f...', measure: true }],
  },
];

function FieldRow({ field }: { field: Field }) {
  const [on, setOn] = useState(!!field.on);
  return (
    <label className="relative flex h-[30px] items-center pl-[55px]">
      <span className="relative h-[15px] w-[15px] shrink-0">
        <input type="checkbox" checked={on} onChange={() => setOn(!on)} className="block h-[15px] w-[15px] appearance-none rounded-xs border border-[#797775] bg-[#f8f7f6] checked:border-[#117865] checked:bg-[#117865]" />
        {on ? <svg className="pointer-events-none absolute top-0 left-0" width="15" height="15" viewBox="0 0 15 15" fill="none" stroke="#fff" strokeWidth="1.500" aria-hidden="true"><path d="M3 7.500l3 3 6-6.500" /></svg> : null}
      </span>
      <span className="ml-2.5 w-[22px] shrink-0">
        {field.measure ? (
          <svg width="16" height="18" viewBox="0 0 16 18" fill="none" stroke="#323130" strokeWidth="1.400" aria-hidden="true">
            <rect x="1" y="1" width="14" height="16" rx="2.500" /><rect x="4" y="3.500" width="8" height="3.500" rx="1" />
            <path d="M4 10.500h1.800M7.100 10.500h1.800M10.200 10.500H12M4 14h1.800M7.100 14h1.800M10.200 14H12" strokeWidth="1.900" />
          </svg>
        ) : null}
      </span>
      <span className="whitespace-nowrap">{field.name}</span>
      {field.mark === 'a' ? <Stroke className="top-[25px] left-[121px]" w={38} h={8} d="M2 2q16 3 34 4" /> : null}
      {field.mark === 'b' ? <Stroke className="top-[26px] left-[115px]" w={56} h={12} d="M2 9q20-1 32-4t19-3" /> : null}
    </label>
  );
}

function DataPane() {
  return (
    <aside aria-label="Data" className="relative flex w-[212px] shrink-0 flex-col overflow-hidden bg-[#f3f2f1] text-sm text-[#323130]">
      <div className="flex h-[50px] shrink-0 items-center justify-between pl-[10px]">
        <h2 className="text-lg font-semibold text-[#201f1e]">Data</h2>
        <button type="button" aria-label="Collapse data" className="-mr-1"><DoubleChevron /></button>
      </div>
      <label className="mt-[7px] ml-[5px] flex h-[30px] shrink-0 items-center gap-2.5 rounded-l-md border border-r-0 border-[#d2d0ce] border-b-[#605e5c] bg-white pl-[14px]">
        <svg className="shrink-0" width="19" height="19" viewBox="0 0 19 19" fill="none" stroke="#605e5c" strokeWidth="1.400" aria-hidden="true"><circle cx="8" cy="8" r="6.500" /><path d="M12.700 12.700L18 18" /></svg>
        <input aria-label="Search fields" placeholder="Search" className="w-full min-w-0 bg-transparent text-base outline-none placeholder:text-[#605e5c]" />
      </label>
      <div className="mt-[12px]">
        {model.map((t) => (
          <div key={t.name}>
            <button type="button" className="relative flex h-[30px] w-full items-center pl-[17px] text-left">
              <Chevron className={t.open ? 'shrink-0' : 'shrink-0 -rotate-90'} />
              <svg className="ml-[5px] shrink-0" width="16" height="16" viewBox="0 0 16 16" fill="none" stroke="#323130" strokeWidth="1.400" aria-hidden="true">
                <rect x=".8" y=".8" width="14.400" height="14.400" rx="3" /><path d="M1 5.500h14M1 10.500h14M5.500 1v14M10.500 1v14" />
              </svg>
              {t.used ? (
                <svg className="absolute top-[14px] left-[44px]" width="15" height="15" viewBox="0 0 15 15" fill="none" aria-hidden="true">
                  <circle cx="7.500" cy="7.500" r="7.500" fill="#117865" /><path d="M4.500 7.500l2.200 2.200L10.500 6" stroke="#fff" strokeWidth="1.700" />
                </svg>
              ) : null}
              <span className="ml-[7px] whitespace-nowrap">{t.name}</span>
            </button>
            {t.fields.map((f) => <FieldRow key={f.name} field={f} />)}
          </div>
        ))}
      </div>
      <div className="absolute top-[97px] right-0 h-[620px] w-[2px] bg-[#c8c6c4]" />
    </aside>
  );
}

export default function App() {
  return (
    <div className="flex h-screen flex-col overflow-hidden bg-white font-['Open_Sans','Noto_Sans',sans-serif] text-[#323130]">
      <Ribbon />
      <div className="flex min-h-0 flex-1">
        <ViewRail />
        <ReportCanvas />
        <FiltersPane />
        <VisualizationsPane />
        <DataPane />
      </div>
    </div>
  );
}
